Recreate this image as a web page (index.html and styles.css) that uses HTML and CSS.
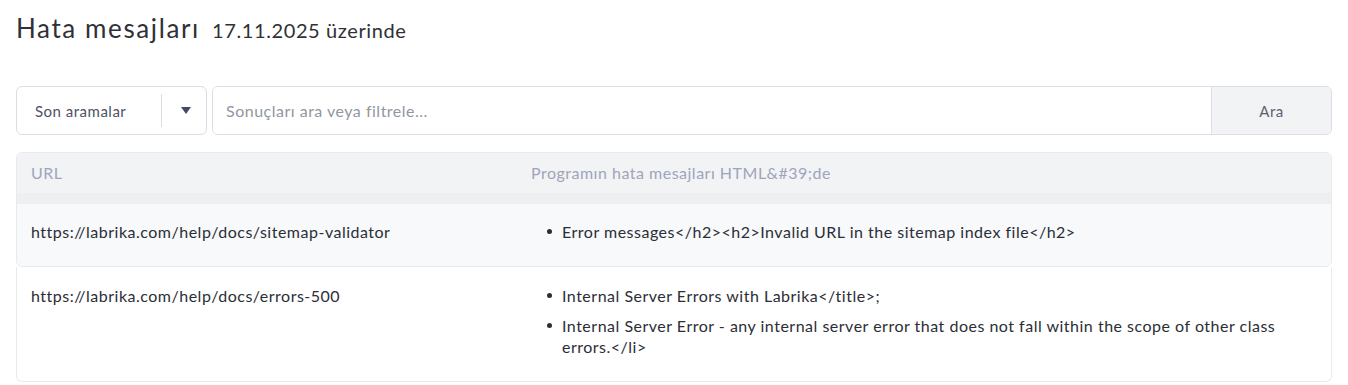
FILE: index.html
```html
<!DOCTYPE html>
<html lang="tr">
<head>
    <meta charset="UTF-8">
    <title>Hata mesajları</title>
    <link rel="stylesheet" href="styles.css">
</head>
<body>
    <div class="page">
        <h1 class="title">Hata mesajları <span class="date">17.11.2025 üzerinde</span></h1>

        <div class="search">
            <div class="recent">
                <span class="recent-label">Son aramalar</span>
                <span class="recent-sep"></span>
                <span class="recent-arrow"></span>
            </div>
            <div class="query">
                <input class="query-input" type="text" placeholder="Sonuçları ara veya filtrele...">
                <button class="query-btn">Ara</button>
            </div>
        </div>

        <div class="table">
            <div class="thead">
                <div class="col-url">URL</div>
                <div class="col-msg">Programın hata mesajları HTML&amp;#39;de</div>
            </div>
            <div class="row row-first">
                <div class="col-url">https://labrika.com/help/docs/sitemap-validator</div>
                <div class="col-msg">
                    <ul>
                        <li>Error messages&lt;/h2&gt;&lt;h2&gt;Invalid URL in the sitemap index file&lt;/h2&gt;</li>
                    </ul>
                </div>
            </div>
        </div>
        <div class="row row-card">
            <div class="col-url">https://labrika.com/help/docs/errors-500</div>
            <div class="col-msg">
                <ul>
                    <li>Internal Server Errors with Labrika&lt;/title&gt;;</li>
                    <li>Internal Server Error - any internal server error that does not fall within the scope of other class errors.&lt;/li&gt;</li>
                </ul>
            </div>
        </div>
    </div>
</body>
</html>
```

FILE: styles.css
```css
* {box-sizing: border-box; margin: 0; padding: 0;}
body {
    background: #fff;
    color: #2b2e36;
    font-family: 'Lato', 'Noto Sans', sans-serif;
    font-size: 16px;
    letter-spacing: 0.5px;
}
.page {padding: 10px 16px 0 16px;}

.title {
    font-size: 26px;
    font-weight: 400;
    color: #2f3136;
    line-height: 36px;
    letter-spacing: 1.6px;
}
.date {font-size: 20px; margin-left: 4px; letter-spacing: 0.6px;}

.search {
    display: flex;
    gap: 5px;
    margin-top: 38px;
    height: 49px;
}
.recent {
    width: 191px;
    border: 1px solid #dcdde6;
    border-radius: 6px;
    display: flex;
    align-items: center;
    padding-left: 18px;
}
.recent-label {font-size: 15px; color: #4d5263; width: 126px;}
.recent-sep {width: 1px; height: 33px; background: #dcdde6;}
.recent-arrow {
    margin-left: 19px;
    border-left: 5px solid transparent;
    border-right: 5px solid transparent;
    border-top: 7px solid #434a61;
}
.query {
    flex: 1;
    display: flex;
    border: 1px solid #dcdde6;
    border-radius: 6px;
    overflow: hidden;
}
.query-input {
    flex: 1;
    border: 0;
    outline: 0;
    padding-left: 13px;
    font: inherit;
    letter-spacing: inherit;
    color: #2b2e36;
}
.query-input::placeholder {color: #92969f;}
.query-btn {
    width: 120px;
    border: 0;
    border-left: 1px solid #dcdde6;
    background: #f2f3f5;
    font: inherit;
    font-size: 15px;
    letter-spacing: inherit;
    color: #5c6170;
}

.table {
    margin-top: 17px;
    border: 1px solid #e8eaef;
    border-radius: 6px;
    overflow: hidden;
}
.thead {
    display: flex;
    background: #f2f3f5;
    color: #9ea5bb;
    height: 51px;
    padding-top: 10px;
    border-bottom: 11px solid #eeeff0;
}
.row {display: flex; line-height: 21px;}
.row-first {
    background: #f7f9fb;
    height: 62px;
    padding-top: 17px;
}
.row-card {
    border: 1px solid #e8eaef;
    border-top: 0;
    border-radius: 0 0 6px 6px;
    padding: 18px 0 24px;
}
.col-url {width: 514px; padding-left: 14px;}
.col-msg {flex: 1;}
ul {list-style: none;}
li {
    position: relative;
    padding-left: 31px;
    margin-bottom: 9px;
    padding-right: 40px;
}
li:last-child {margin-bottom: 0;}
li::before {
    content: "";
    position: absolute;
    left: 16px; top: 8px;
    width: 5px; height: 5px;
    border-radius: 50%;
    background: #2b2e36;
}
```
